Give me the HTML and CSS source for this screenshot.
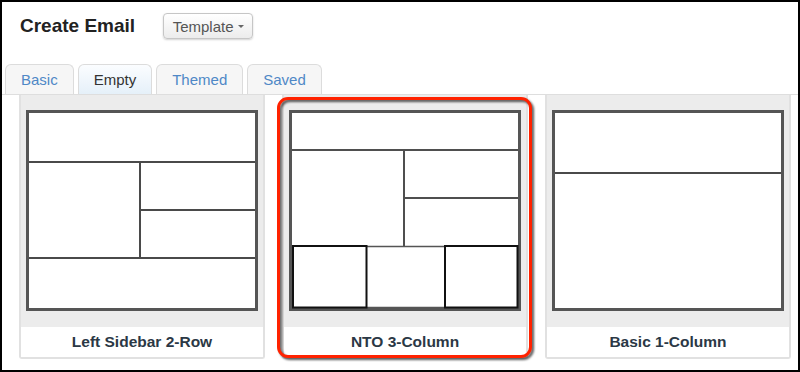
FILE: index.html
```html
<!DOCTYPE html>
<html>
<head>
<meta charset="utf-8">
<link rel="stylesheet" href="styles.css">
</head>
<body>
<div class="frame">
  <div class="header">
    <h1 class="title">Create Email</h1>
    <button class="btn">Template <span class="caret"></span></button>
  </div>
  <div class="tabs">
    <div class="tab">Basic</div>
    <div class="tab active">Empty</div>
    <div class="tab">Themed</div>
    <div class="tab">Saved</div>
  </div>
  <div class="cards">
    <div class="card">
      <div class="thumb-wrap">
        <svg class="thumb" width="232" height="201" viewBox="0 0 232 201">
          <rect x="1.5" y="1.5" width="229" height="198" fill="#fff" stroke="#555" stroke-width="3"/>
          <g stroke="#4a4a4a" stroke-width="2">
            <line x1="3" y1="52" x2="229" y2="52"/>
            <line x1="114" y1="52" x2="114" y2="148"/>
            <line x1="114" y1="100" x2="229" y2="100"/>
            <line x1="3" y1="148" x2="229" y2="148"/>
          </g>
        </svg>
      </div>
      <div class="label">Left Sidebar 2-Row</div>
    </div>
    <div class="card selected">
      <div class="thumb-wrap">
        <svg class="thumb" width="232" height="201" viewBox="0 0 232 201">
          <rect x="1.5" y="1.5" width="229" height="198" fill="#fff" stroke="#555" stroke-width="3"/>
          <g stroke="#4f4f4f" stroke-width="2">
            <line x1="3" y1="40" x2="229" y2="40"/>
            <line x1="115" y1="40" x2="115" y2="136"/>
            <line x1="115" y1="88" x2="229" y2="88"/>
          </g>
          <line x1="78" y1="136.5" x2="156" y2="136.5" stroke="#555" stroke-width="1.5"/>
          <line x1="78" y1="197.5" x2="156" y2="197.5" stroke="#555" stroke-width="1.5"/>
          <rect x="4" y="136" width="73.5" height="61.5" fill="none" stroke="#111" stroke-width="2"/>
          <rect x="156" y="136" width="72.5" height="61.5" fill="none" stroke="#111" stroke-width="2"/>
        </svg>
      </div>
      <div class="label">NTO 3-Column</div>
    </div>
    <div class="card">
      <div class="thumb-wrap">
        <svg class="thumb" width="232" height="201" viewBox="0 0 232 201">
          <rect x="1.5" y="1.5" width="229" height="198" fill="#fff" stroke="#555" stroke-width="3"/>
          <line x1="3" y1="63" x2="229" y2="63" stroke="#4a4a4a" stroke-width="2"/>
        </svg>
      </div>
      <div class="label">Basic 1-Column</div>
    </div>
  </div>
</div>
</body>
</html>
```

FILE: styles.css
```css
* { box-sizing: border-box; }
html, body { margin: 0; padding: 0; background: #fff; }
body { font-family: "Liberation Sans", Arial, sans-serif; }

.frame {
  width: 800px;
  height: 372px;
  border: 2px solid #000;
  background: #fff;
  overflow: hidden;
}

.header {
  display: flex;
  align-items: center;
  height: 26px;
  margin-top: 11px;
  padding-left: 18px;
}

.title {
  margin: 0;
  font-size: 19px;
  font-weight: bold;
  color: #222;
  line-height: 26px;
}

.btn {
  margin-left: 28px;
  width: 90px;
  height: 26px;
  padding: 0;
  border: 1px solid #c6c6c6;
  border-radius: 4px;
  background: linear-gradient(#ffffff, #ececec);
  box-shadow: 0 1px 2px rgba(0,0,0,0.18);
  font-family: "Liberation Sans", Arial, sans-serif;
  font-size: 15px;
  color: #555;
  display: flex;
  align-items: center;
  justify-content: center;
  gap: 4px;
}

.caret {
  display: inline-block;
  width: 0;
  height: 0;
  border-left: 3.5px solid transparent;
  border-right: 3.5px solid transparent;
  border-top: 3.5px solid #666;
  margin-top: 1px;
}

.tabs {
  display: flex;
  gap: 4px;
  margin-top: 25px;
  padding-left: 3px;
  height: 31px;
  border-bottom: 1px solid #dedede;
}

.tab {
  height: 30px;
  padding: 0 15px;
  border: 1px solid #dcdcdc;
  border-bottom: none;
  border-radius: 6px 6px 0 0;
  background: #f6f6f6;
  color: #4f88c6;
  font-size: 15px;
  line-height: 30px;
}

.tab.active {
  background: linear-gradient(#fbfdff, #e5f0f9);
  color: #333;
}

.cards {
  display: flex;
  gap: 17px;
  padding-left: 17px;
}

.card {
  position: relative;
  width: 246px;
  height: 264px;
  background: #ececec;
  border: 2px solid #e1e1e1;
  border-top: none;
  border-radius: 0 0 3px 3px;
  display: flex;
  flex-direction: column;
}

.thumb-wrap {
  display: flex;
  justify-content: center;
  padding-top: 15px;
  height: 232px;
}

.thumb { display: block; }

.label {
  margin-top: auto;
  height: 30px;
  background: #fff;
  text-align: center;
  font-size: 15.5px;
  font-weight: bold;
  line-height: 30px;
  color: #2b3845;
}

.card.selected::after {
  content: "";
  position: absolute;
  left: -7px;
  right: -6px;
  top: 2px;
  bottom: -1px;
  border: 3px solid #ff2200;
  border-radius: 11px;
  filter: drop-shadow(2px 2px 1px rgba(0,0,0,0.65));
}
```
